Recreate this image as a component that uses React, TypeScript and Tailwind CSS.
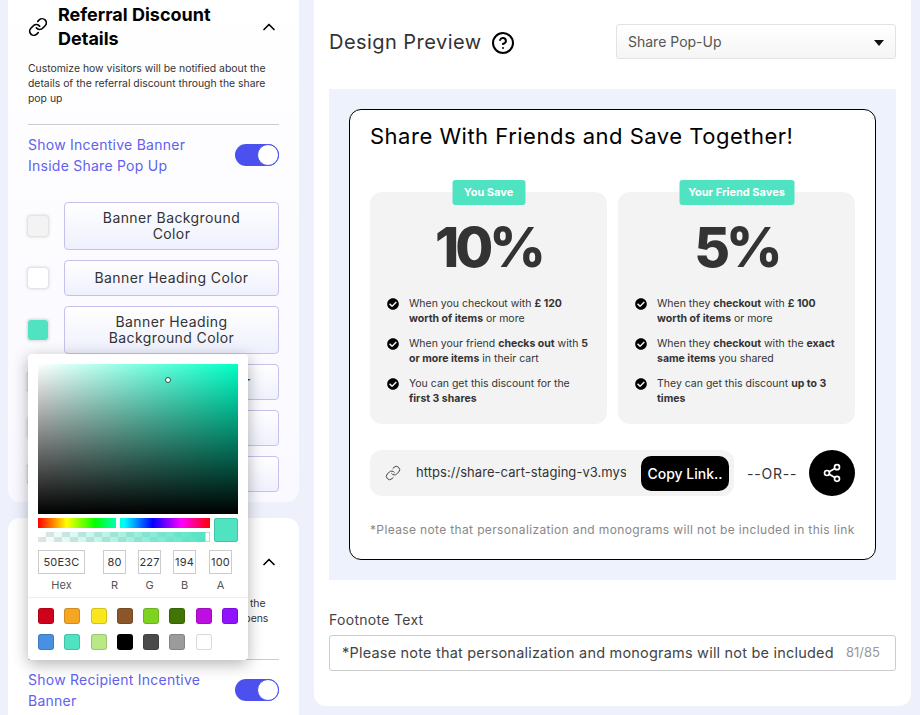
import { ChevronUp, CircleHelp, Link, Share2 } from 'lucide-react';
import { FaCheckCircle } from 'react-icons/fa';

const presets = ['#D0021B', '#F5A623', '#F8E71C', '#8B572A', '#7ED321', '#417505', '#BD10E0', '#9013FE', '#4A90E2', '#50E3C2', '#B8E986', '#000000', '#4A4A4A', '#9B9B9B', '#FFFFFF'];

const Toggle = () => (
    <div className="flex justify-end w-[44px] h-[22px] rounded-full bg-[#4b50ee] shrink-0">
        <div className="w-[22px] h-[22px] rounded-full bg-white border border-[#4b50ee]" />
    </div>
);

const ColorRow = ({ color, label, tall }: { color: string; label: string; tall?: boolean }) => (
    <div className="flex items-center">
        <div className="w-[22px] h-[22px] -ml-[1px] rounded-[4px] border border-[#e4e4e4] shadow-[0_0_3px_rgba(0,0,0,0.15)] shrink-0" style={{ backgroundColor: color }} />
        <button className={`ml-[15px] w-[215px] ${tall ? 'h-[48px] px-[24px]' : 'h-[36px] px-[4px]'} rounded-[4px] border border-[#c7c0ec] bg-gradient-to-b from-white to-[#eef0fd] text-[14px] leading-[16px] tracking-[0.4px] text-[#333]`}>
            {label}
        </button>
    </div>
);

const Field = ({ value, label, width }: { value: string; label: string; width: string }) => (
    <div className={`flex flex-col items-center ${width}`}>
        <div className="flex items-center justify-center w-full h-[24px] border border-[#ccc] text-[11px] tracking-[0.2px] text-[#333]">{value}</div>
        <div className="mt-[5px] text-[11px] leading-[12px] text-[#555]">{label}</div>
    </div>
);

const ColorPicker = () => (
    <div className="absolute left-[28px] top-[354px] w-[220px] h-[306px] rounded-[4px] bg-white shadow-[0_4px_16px_rgba(0,0,0,0.3)] z-10">
        <div className="px-[10px] pt-[10px]">
            <div className="relative h-[150px] bg-[linear-gradient(to_top,#000,transparent),linear-gradient(to_right,#fff,#00ffc6)]">
                <div className="absolute left-[127px] top-[13px] w-[6px] h-[6px] rounded-full border border-[#1b5a4c] bg-white" />
            </div>
            <div className="flex mt-[4px]">
                <div className="w-[172px]">
                    <div className="relative h-[10px] bg-[linear-gradient(to_right,#f00,#ff0,#0f0,#0ff,#00f,#f0f,#f00)]">
                        <div className="absolute left-[78px] top-0 w-[4px] h-[10px] rounded-[1px] bg-white" />
                    </div>
                    <div className="relative h-[10px] mt-[4px] bg-[repeating-conic-gradient(#dfe5e4_0_25%,#fff_0_50%)] bg-[length:16px_10px]">
                        <div className="h-full bg-gradient-to-r from-transparent to-[#50e3c2]" />
                        <div className="absolute right-0 top-0 w-[5px] h-[10px] rounded-[1px] bg-white border border-[#d5d5d5]" />
                    </div>
                </div>
                <div className="ml-[4px] w-[24px] h-[24px] rounded-[2px] bg-[#50e3c2] border border-[#43c4a8]" />
            </div>
            <div className="flex mt-[8px]">
                <Field value="50E3C" label="Hex" width="w-[47px]" />
                <Field value="80" label="R" width="w-[23px] ml-[18px]" />
                <Field value="227" label="G" width="w-[23px] ml-[12px]" />
                <Field value="194" label="B" width="w-[23px] ml-[12px]" />
                <Field value="100" label="A" width="w-[23px] ml-[13px]" />
            </div>
        </div>
        <div className="mt-[6px] border-t border-[#eee] grid grid-cols-8 gap-y-[10px] gap-x-[10px] px-[10px] pt-[10px]">
            {presets.map((c) => (
                <div key={c} className="w-[16px] h-[16px] rounded-[3px] border border-black/15" style={{ backgroundColor: c }} />
            ))}
        </div>
    </div>
);

const Check = ({ children }: { children: React.ReactNode }) => (
    <div className="flex items-start">
        <FaCheckCircle className="w-[12px] h-[12px] mt-[2px] text-black shrink-0" />
        <p className="ml-[10px] text-[10.5px] leading-[15px] text-[#333]">{children}</p>
    </div>
);

const SavePanel = ({ pill, pillWidth, value, children }: { pill: string; pillWidth: string; value: string; children: React.ReactNode }) => (
    <div className="relative flex-1 h-[232px] rounded-[12px] bg-[#f3f3f3] px-[17px] pt-[24px]">
        <div className={`absolute -top-[12px] left-1/2 -translate-x-1/2 ${pillWidth} h-[25px] flex items-center justify-center rounded-[3px] bg-[#50e3c2] text-[11px] font-bold text-white`}>
            {pill}
        </div>
        <div className="text-center text-[55px] leading-[62px] font-extrabold tracking-[-4px] text-[#333]">{value}</div>
        <div className="flex flex-col gap-[10px] mt-[18px]">{children}</div>
    </div>
);

export default function App() {
    return (
        <div className="relative flex w-[920px] h-[715px] overflow-hidden bg-[#eef1fc] font-['Inter',sans-serif]">
            {/* Left column */}
            <div className="w-[291px] ml-[8px] -mt-[17px] shrink-0">
                <div className="h-[519px] rounded-[12px] bg-gradient-to-b from-white to-[#f9f9ff] px-[20px] pt-[20px]">
                    <div className="flex items-center">
                        <Link className="w-[20px] h-[20px] text-black shrink-0" strokeWidth={2} />
                        <h2 className="ml-[10px] w-[190px] text-[18px] leading-[24px] font-bold text-black">Referral Discount Details</h2>
                        <ChevronUp className="ml-auto w-[20px] h-[20px] text-black" strokeWidth={2} />
                    </div>
                    <p className="mt-[10px] text-[10.4px] leading-[15px] text-[#333]">
                        Customize how visitors will be notified about the details of the referral discount through the share pop up
                    </p>
                    <div className="mt-[18px] border-t border-[#ccc]" />
                    <div className="flex items-center justify-between mt-[9px]">
                        <div className="w-[175px] text-[14px] leading-[21px] tracking-[0.25px] text-[#5f62f0]">Show Incentive Banner Inside Share Pop Up</div>
                        <Toggle />
                    </div>
                    <div className="flex flex-col gap-[10px] mt-[26px]">
                        <ColorRow color="#f3f3f3" label="Banner Background Color" tall />
                        <ColorRow color="#ffffff" label="Banner Heading Color" />
                        <ColorRow color="#50e3c2" label="Banner Heading Background Color" tall />
                        <ColorRow color="#333333" label="Banner Highlight Color" />
                        <ColorRow color="#f3f3f3" label="Banner Text Color" />
                        <ColorRow color="#000000" label="Footer Color" />
                    </div>
                </div>
                <div className="mt-[16px] h-[300px] rounded-[12px] bg-white px-[20px] pt-[20px]">
                    <div className="flex items-center">
                        <Link className="w-[20px] h-[20px] text-black shrink-0" strokeWidth={2} />
                        <h2 className="ml-[10px] w-[190px] text-[18px] leading-[24px] font-bold text-black">Recipient Incentive Banner</h2>
                        <ChevronUp className="ml-auto w-[20px] h-[20px] text-black" strokeWidth={2} />
                    </div>
                    <p className="mt-[10px] text-[10.4px] leading-[15px] text-[#333]">
                        Customize how visitors will be notified about the details of the discount when the share link opens up
                    </p>
                    <div className="mt-[18px] border-t border-[#ccc]" />
                    <div className="flex items-center justify-between mt-[9px]">
                        <div className="w-[190px] text-[14px] leading-[21px] tracking-[0.25px] text-[#5f62f0]">Show Recipient Incentive Banner</div>
                        <Toggle />
                    </div>
                </div>
            </div>
            <ColorPicker />

            {/* Right card */}
            <div className="ml-[15px] -mt-[17px] w-[597px] h-[723px] rounded-[12px] bg-white px-[15px] shrink-0">
                <div className="flex items-start justify-between h-[76px] pt-[41px]">
                    <div className="flex items-center mt-[1px]">
                        <span className="text-[20px] leading-[35px] tracking-[0.45px] text-[#333]">Design Preview</span>
                        <CircleHelp className="ml-[9px] w-[24px] h-[24px] text-black" strokeWidth={2} />
                    </div>
                    <div className="flex items-center justify-between w-[280px] h-[35px] pl-[11px] pr-[10px] rounded-[3px] border border-[#e3e3e3] bg-gradient-to-b from-white to-[#f5f5f5] text-[14px] text-[#555]">
                        Share Pop-Up
                        <svg width="12" height="6" viewBox="0 0 12 6" className="mt-[3px]"><path d="M1 0h10L6 6z" fill="#111" /></svg>
                    </div>
                </div>

                <div className="mt-[30px] w-[567px] h-[491px] bg-[#eef2fd] p-[20px]">
                    <div className="w-[527px] h-[451px] rounded-[12px] border border-black bg-white px-[20px]">
                        <h1 className="pt-[10px] text-[22px] leading-[32px] tracking-[0.5px] text-black">Share With Friends and Save Together!</h1>
                        <div className="flex gap-[11px] mt-[40px]">
                            <SavePanel pill="You Save" pillWidth="w-[73px]" value="10%">
                                <Check>When you checkout with <b>£ 120 worth of items</b> or more</Check>
                                <Check>When your friend <b>checks out</b> with <b>5 or more items</b> in their cart</Check>
                                <Check>You can get this discount for the <b>first 3 shares</b></Check>
                            </SavePanel>
                            <SavePanel pill="Your Friend Saves" pillWidth="w-[115px]" value="5%">
                                <Check>When they <b>checkout</b> with <b>£ 100 worth of items</b> or more</Check>
                                <Check>When they <b>checkout</b> with the <b>exact same items</b> you shared</Check>
                                <Check>They can get this discount <b>up to 3 times</b></Check>
                            </SavePanel>
                        </div>
                        <div className="flex items-center mt-[26px]">
                            <div className="flex items-center w-[364px] h-[46px] rounded-[12px] bg-[#f3f3f3] pl-[15px] pr-[5px]">
                                <Link className="w-[16px] h-[16px] text-[#444] shrink-0" strokeWidth={1.5} />
                                <span className="ml-[15px] w-[210px] overflow-hidden whitespace-nowrap text-[13px] tracking-[0.05px] text-[#333]">https://share-cart-staging-v3.mys</span>
                                <button className="ml-auto w-[88px] h-[35px] rounded-[10px] bg-black text-[14px] font-medium text-white">Copy Link..</button>
                            </div>
                            <span className="ml-[13px] text-[14px] tracking-[0.8px] text-[#333]">--OR--</span>
                            <div className="ml-auto flex items-center justify-center w-[46px] h-[46px] rounded-full bg-black">
                                <Share2 className="w-[20px] h-[20px] text-white" strokeWidth={2} />
                            </div>
                        </div>
                        <p className="mt-[25px] whitespace-nowrap text-[12px] leading-[18px] tracking-[0.36px] text-[#888]">*Please note that personalization and monograms will not be included in this link</p>
                    </div>
                </div>

                <div className="mt-[31px] text-[14px] leading-[18px] tracking-[0.3px] text-[#444]">Footnote Text</div>
                <div className="flex items-center justify-between mt-[6px] w-[567px] h-[36px] rounded-[3px] border border-[#ccc] pl-[12px] pr-[15px]">
                    <span className="whitespace-nowrap text-[14.5px] tracking-[0.2px] text-[#444]">*Please note that personalization and monograms will not be included</span>
                    <span className="text-[13px] text-[#999]">81/85</span>
                </div>
            </div>
        </div>
    );
}
